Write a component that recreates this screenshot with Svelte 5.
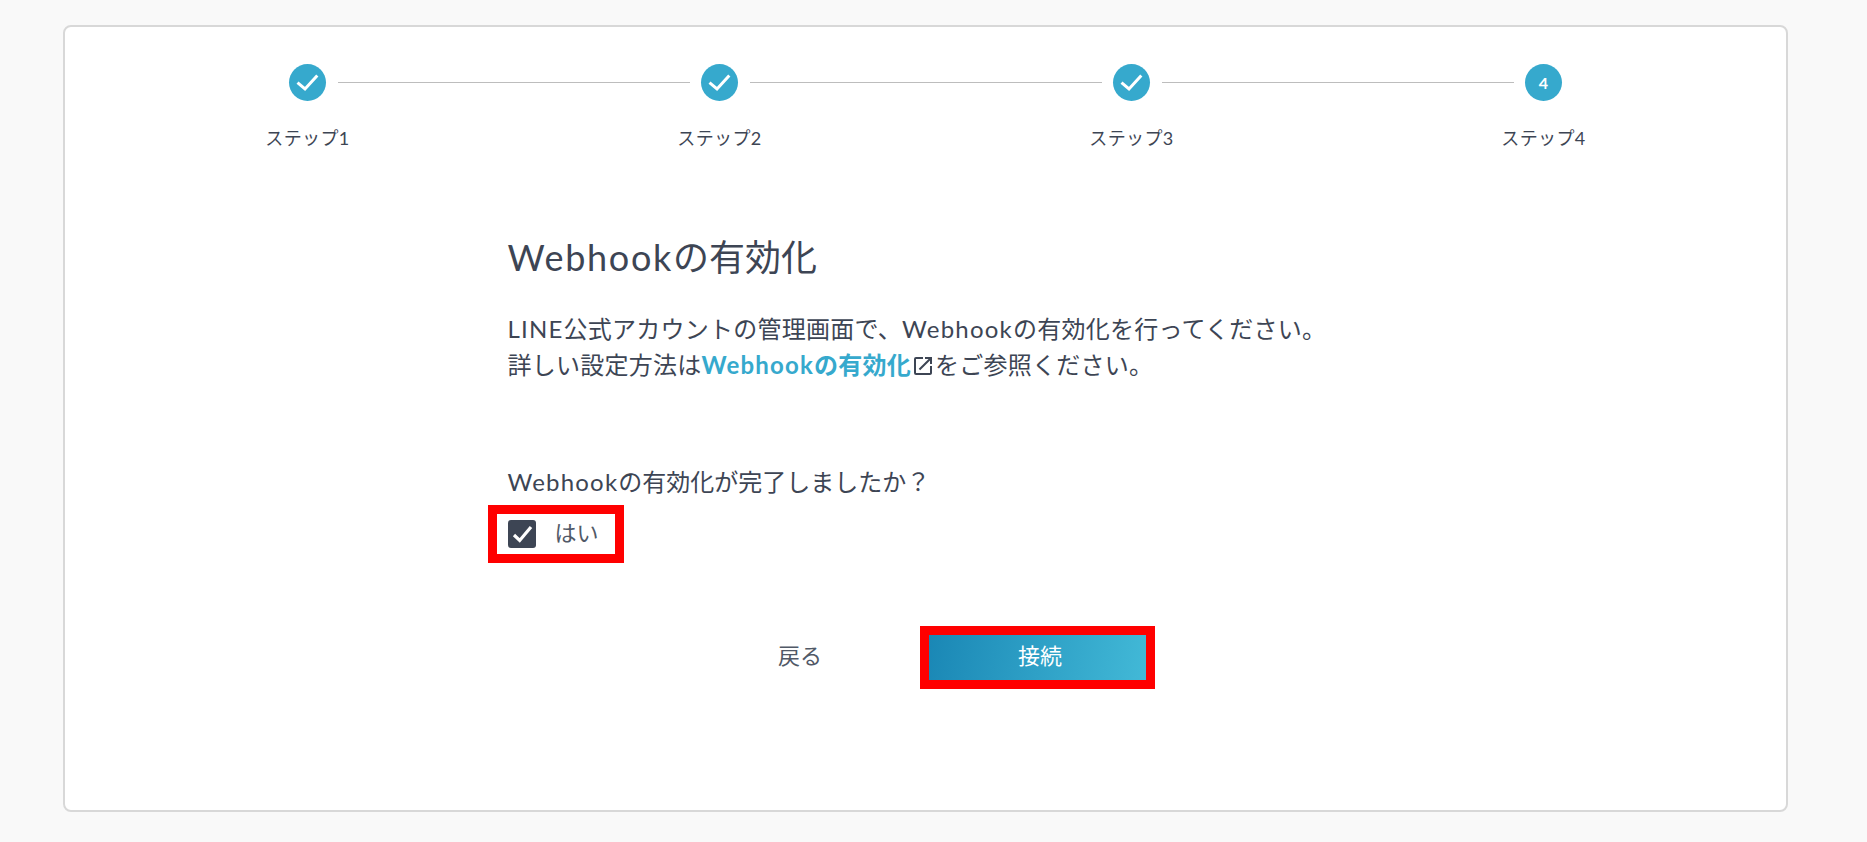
<script>
	const steps = [
		{ label: 'ステップ1', done: true },
		{ label: 'ステップ2', done: true },
		{ label: 'ステップ3', done: true },
		{ label: 'ステップ4', done: false }
	]
	let agreed = $state(true)
</script>

<div class="page">
	<section class="card">
		<ol class="steps">
			{#each steps as step, i}
				<li class="step">
					<span class="circle">
						{#if step.done}
							<svg width="37" height="37" viewBox="0 0 37 37" aria-hidden="true">
								<path d="M8.5 18.7 16 25 28.3 11.5" fill="none" stroke="#fff" stroke-width="3" />
							</svg>
						{:else}
							{i + 1}
						{/if}
					</span>
					<span class="label">{step.label}</span>
				</li>
			{/each}
		</ol>

		<div class="content">
			<h1><span class="latin">Webhook</span>の有効化</h1>
			<p class="lead">
				<span class="latin">LINE</span>公式アカウントの管理画面で、<span class="latin">Webhook</span>の有効化を行ってください。<br />
				詳しい設定方法は<a href="#webhook"><span class="latin">Webhook</span>の有効化</a><svg class="ext" width="24" height="24" viewBox="0 0 24 24" aria-hidden="true"><path d="M19 19H5V5h7V3H5a2 2 0 0 0-2 2v14a2 2 0 0 0 2 2h14c1.1 0 2-.9 2-2v-7h-2v7zM14 3v2h3.59l-9.83 9.83 1.41 1.41L19 6.41V10h2V3h-7z" fill="#3d4554" /></svg>をご参照ください。
			</p>

			<p class="question"><span class="latin">Webhook</span>の有効化が完了しましたか？</p>
			<label class="check-row">
				<input type="checkbox" bind:checked={agreed} />
				<span class="box">
					{#if agreed}
						<svg width="28" height="28" viewBox="0 0 28 28" aria-hidden="true">
							<path d="M6 15 11.7 20.5 23 7" fill="none" stroke="#fff" stroke-width="3.2" />
						</svg>
					{/if}
				</span>
				<span class="check-text">はい</span>
			</label>
		</div>

		<div class="actions">
			<button class="back" type="button">戻る</button>
			<div class="connect-frame">
				<button class="connect" type="button">接続</button>
			</div>
		</div>
	</section>
</div>

<style>
	:global(body) {
		background: #f9f9f9;
		font-family: Lato, "Noto Sans CJK JP", sans-serif;
		color: #3d4554;
	}

	.page {
		padding: 25px 78px 30px 63px;
		height: 842px;
		box-sizing: border-box;
	}

	.card {
		height: 100%;
		box-sizing: border-box;
		width: 1725px;
		background: #fff;
		border: 2px solid #d8d8d8;
		border-radius: 8px;
		padding-top: 37px;
	}

	.steps {
		list-style: none;
		margin: 0 auto;
		padding: 0;
		width: 1648px;
		display: grid;
		grid-template-columns: repeat(4, 1fr);
	}

	.step {
		position: relative;
		display: flex;
		flex-direction: column;
		align-items: center;
		gap: 23px;
	}

	.step:not(:last-child)::after {
		content: '';
		position: absolute;
		top: 18px;
		left: calc(50% + 30px);
		right: calc(-50% + 30px);
		height: 1px;
		background: #bdbdbd;
	}

	.circle {
		width: 37px;
		height: 37px;
		border-radius: 50%;
		background: #36a9cd;
		color: #fff;
		font-size: 16px;
		font-weight: 700;
		display: flex;
		align-items: center;
		justify-content: center;
	}

	.label {
		font-size: 18px;
		letter-spacing: 0.4px;
		line-height: 28px;
	}

	.content {
		width: 836px;
		margin: 0 auto;
		padding-top: 81px;
	}

	.latin {
		letter-spacing: 1.2px;
	}

	h1 {
		margin: 0;
		font-size: 36px;
		font-weight: 400;
		line-height: 48px;
	}

	h1 .latin {
		letter-spacing: 1.7px;
	}

	.lead {
		margin: 30px 0 0;
		font-size: 24px;
		letter-spacing: 0.25px;
		line-height: 36px;
	}

	.lead a {
		color: #36a9cd;
		font-weight: 700;
		text-decoration: none;
	}

	.ext {
		vertical-align: -4px;
	}

	.question {
		margin: 82px 0 0;
		font-size: 24px;
		line-height: 34px;
	}

	.check-row {
		margin: 6px 0 0 -20px;
		width: 136px;
		height: 58px;
		box-sizing: border-box;
		border: 9px solid #f00;
		padding-left: 11px;
		display: flex;
		align-items: center;
		gap: 19px;
	}

	.check-row input {
		display: none;
	}

	.box {
		width: 28px;
		height: 28px;
		border-radius: 3px;
		background: #3d4554;
		display: flex;
	}

	.check-text {
		font-size: 22px;
		color: #515967;
		padding-bottom: 6px;
	}

	.actions {
		margin-top: 63px;
		padding-left: 713px;
		display: flex;
		align-items: center;
		gap: 98px;
	}

	.back {
		background: none;
		border: 0;
		padding: 0 0 8px;
		font: inherit;
		font-size: 22px;
		color: #515967;
	}

	.connect-frame {
		border: 9px solid #f00;
		display: flex;
	}

	.connect {
		width: 217px;
		height: 45px;
		border: 0;
		padding: 0 0 8px 5px;
		background: linear-gradient(100deg, #1a87b5, #42b9d7);
		color: #fff;
		font: inherit;
		font-size: 22px;
	}
</style>
